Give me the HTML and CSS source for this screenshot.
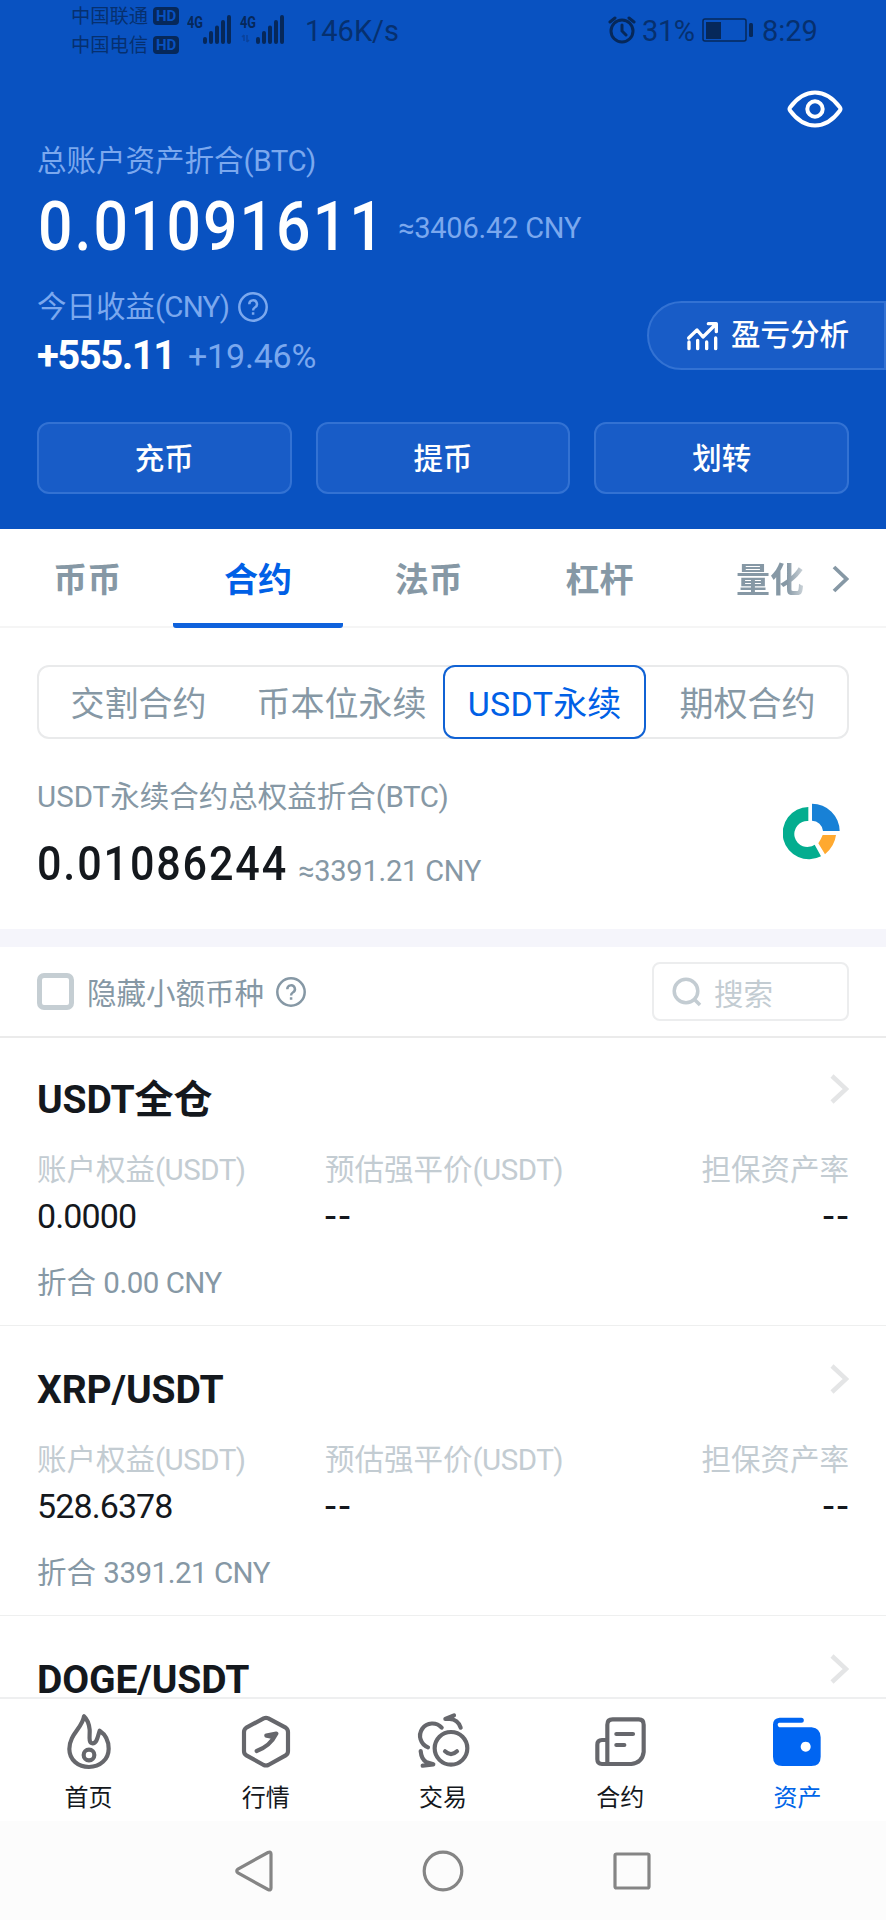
FILE: index.html
```html
<!DOCTYPE html>
<html lang="zh-CN">
<head>
<meta charset="utf-8">
<title>资产</title>
<link rel="stylesheet" href="styles.css">
</head>
<body>
<div class="app">
  <header class="hero">
    <div class="status">
      <div class="carriers">
        <div class="carrier">中国联通<span class="hd">HD</span></div>
        <div class="carrier">中国电信<span class="hd">HD</span></div>
      </div>
      <svg class="signal" width="100" height="32" viewBox="0 0 100 32">
        <g class="ink-line">
          <path d="M18 26v3M24 20v9M30 14.500v14.500M36 9v20M42 4v25"/>
          <path d="M71 26v3M77 20v9M83 14.500v14.500M89 9v20M95 4v25"/>
        </g>
        <path class="ink-faint" d="M57 22v6m-2-4 2-2m3 0v7m2-2-2 2"/>
        <text class="net" x="0" y="15" textLength="16" lengthAdjust="spacingAndGlyphs">4G</text>
        <text class="net" x="53" y="15" textLength="16" lengthAdjust="spacingAndGlyphs">4G</text>
      </svg>
      <span class="speed">146K/s</span>
      <svg class="alarm" width="28" height="28" viewBox="0 0 28 28">
        <circle cx="14" cy="15" r="11"/>
        <path d="M14 9v6l4 4M2 6l5-4M26 6l-5-4"/>
      </svg>
      <span class="percent">31%</span>
      <svg class="battery" width="52" height="24" viewBox="0 0 52 24">
        <rect class="cell" x="1" y="1" width="43" height="22" rx="2"/>
        <rect class="charge" x="4" y="4" width="15" height="17"/>
        <rect class="charge" x="47" y="5" width="4" height="14" rx="1.500"/>
      </svg>
      <span class="clock">8:29</span>
    </div>
    <div class="eye-row">
      <svg class="eye" width="56" height="38" viewBox="0 0 56 38">
        <path d="M3 17.500Q14 2.500 28 2.500T53 17.500Q54 19 53 20.500Q42 35.500 28 35.500T3 20.500Q2 19 3 17.500Z"/>
        <circle cx="28" cy="19" r="7.700"/>
      </svg>
    </div>
    <div class="label">总账户资产折合<span class="lat">(BTC)</span></div>
    <div class="balance"><span class="big"><span class="cond">0.01091611</span></span><span class="approx">≈3406.42 CNY</span></div>
    <div class="profit">
      <div>
        <div class="label">今日收益<span class="lat cny">(CNY)</span>
          <svg class="help" width="30" height="30" viewBox="0 0 30 30"><circle cx="15" cy="15" r="13.700"/><path d="M11.300 12.200a3.800 3.800 0 1 1 5.500 3.300q-1.700.9-1.700 2.900M15.100 20.300v2.500"/></svg>
        </div>
        <div class="gain"><b>+555.11</b><span>+19.46%</span></div>
      </div>
      <div class="analysis">
        <svg class="chart" width="34" height="30" viewBox="728 150 102 90">
          <path d="M736 201 761 177 779 198 815 162M795 158H819V182M737 213V233M763 208V233M790 213V233M817 201V233"/>
        </svg>
        盈亏分析
      </div>
    </div>
    <div class="actions"><div>充币</div><div>提币</div><div>划转</div></div>
  </header>

  <nav class="tabs">
    <div>币币</div><div class="on">合约</div><div>法币</div><div>杠杆</div><div class="fade">量化</div>
    <svg class="more" width="18" height="30" viewBox="0 0 18 30"><path d="M3 3 15.500 15 3 27"/></svg>
  </nav>

  <section class="summary">
    <div class="segment"><div>交割合约</div><div>币本位永续</div><div class="on"><span class="seg-lat">USDT</span>永续</div><div>期权合约</div></div>
    <div class="equity">
      <div>
        <div class="equity-label"><span class="lat usdt">USDT</span>永续合约总权益折合<span class="lat">(BTC)</span></div>
        <div class="equity-value"><span class="mid"><span class="cond">0.01086244</span></span><span class="approx">≈3391.21 CNY</span></div>
      </div>
      <svg class="pie" width="58" height="58" viewBox="1012 820 174 174">
        <path fill="#03ad8f" d="M1088 835A78.500 78.500 0 1 0 1126 983L1107 948A39 39 0 1 1 1088 877Z"/>
        <path fill="#1881d6" d="M1099 825A83 83 0 0 1 1182 907H1132A34 34 0 0 0 1099 876Z"/>
        <path fill="#ffa92f" d="M1131 919H1171Q1167 952 1138 977L1118 944Q1126 932 1131 919Z"/>
      </svg>
    </div>
  </section>

  <section class="filter">
    <span class="check"></span>
    <span class="hide-small">隐藏小额币种</span>
    <svg class="help" width="30" height="30" viewBox="0 0 30 30"><circle cx="15" cy="15" r="13.700"/><path d="M11.300 12.200a3.800 3.800 0 1 1 5.500 3.300q-1.700.9-1.700 2.900M15.100 20.300v2.500"/></svg>
    <div class="search">
      <svg width="30" height="30" viewBox="0 0 30 30"><circle cx="14" cy="14" r="11.800"/><path d="m22 22 6 6"/></svg>搜索
    </div>
  </section>

  <main class="list">
    <article class="item">
      <div class="title"><span class="t-lat">USDT</span>全仓
        <svg class="go" width="20" height="32" viewBox="0 0 20 32"><path d="M3 3 17 16 3 29"/></svg>
      </div>
      <div class="cols names"><div>账户权益<span class="lat par">(USDT)</span></div><div>预估强平价<span class="lat par">(USDT)</span></div><div>担保资产率</div></div>
      <div class="cols values"><div>0.0000</div><div class="none">--</div><div class="none">--</div></div>
      <div class="worth">折合 <span>0.00 CNY</span></div>
    </article>
    <article class="item">
      <div class="title"><span class="t-lat">XRP/USDT</span>
        <svg class="go" width="20" height="32" viewBox="0 0 20 32"><path d="M3 3 17 16 3 29"/></svg>
      </div>
      <div class="cols names"><div>账户权益<span class="lat par">(USDT)</span></div><div>预估强平价<span class="lat par">(USDT)</span></div><div>担保资产率</div></div>
      <div class="cols values"><div>528.6378</div><div class="none">--</div><div class="none">--</div></div>
      <div class="worth">折合 <span>3391.21 CNY</span></div>
    </article>
    <article class="item">
      <div class="title"><span class="t-lat">DOGE/USDT</span>
        <svg class="go" width="20" height="32" viewBox="0 0 20 32"><path d="M3 3 17 16 3 29"/></svg>
      </div>
    </article>
  </main>

  <nav class="dock">
    <div>
      <svg width="60" height="60" viewBox="176 96 180 180"><g class="stroke">
        <path d="M251 109C247 143 207 163 207 207C207 240 234 261 266 261C299 261 325 238 325 206C325 182 313 162 298 152C292 168 291 190 277 190C263 190 269 166 268 149C266 130 260 117 251 109Z"/>
        <circle cx="266" cy="225" r="16"/></g></svg>
      首页
    </div>
    <div>
      <svg width="60" height="60" viewBox="707 96 180 180"><g class="stroke">
        <path d="M790 115Q797 112 804 115L856 143Q863 148 863 156V214Q863 222 856 226L804 255Q797 258 790 255L738 226Q731 222 731 214V156Q731 148 738 143Z"/>
        <path d="M769 213Q810 198 828 161L798 167Q808 168 814 170"/></g></svg>
      行情
    </div>
    <div>
      <svg width="60" height="60" viewBox="1239 96 180 180"><g class="stroke">
        <circle cx="1353" cy="205" r="49"/>
        <path d="M1325 143A37 37 0 1 0 1284 202M1335 214Q1353 231 1371 214M1382 143Q1374 118 1349 117L1336 117 1362 106M1262 213Q1264 238 1280 247L1300 253 1268 257"/></g></svg>
      交易
    </div>
    <div>
      <svg width="60" height="60" viewBox="1770 96 180 180"><g class="stroke">
        <path d="M1822 252V134Q1822 118 1838 118H1916Q1931 118 1931 134V216Q1927 248 1894 252H1806Q1792 252 1792 238V194Q1792 180 1806 180H1822M1849 162H1899M1849 195H1873"/></g></svg>
      合约
    </div>
    <div class="on">
      <svg width="60" height="60" viewBox="2302 96 180 180">
        <path fill="#0065f2" fill-rule="evenodd" d="M2340 113H2405A7.500 7.500 0 0 1 2405 128H2338Q2334 129 2334 134T2339 142H2436Q2463 145 2463 172V230Q2463 258 2435 258H2348Q2320 258 2320 230V134Q2320 115 2340 113ZM2418 185A15 15 0 1 0 2418.100 185Z"/></svg>
      资产
    </div>
  </nav>

  <footer class="keys">
    <svg width="40" height="44" viewBox="0 0 40 44"><path d="M34 3.500Q37 2 37 5V39Q37 42 34 40.500L4 24Q1.500 22 4 20Z"/></svg>
    <svg width="44" height="44" viewBox="0 0 44 44"><circle cx="22" cy="22" r="18.800"/></svg>
    <svg width="40" height="40" viewBox="0 0 40 40"><rect x="3" y="3" width="34" height="34" rx="1.500"/></svg>
  </footer>
</div>
</body>
</html>
```

FILE: styles.css
```css
* { box-sizing: border-box; }
body { margin: 0; background: #fff; }
svg { display: block; flex: none; fill: none; }
.app {
  width: 886px;
  height: 1920px;
  overflow: hidden;
  display: flex;
  flex-direction: column;
  font-family: Roboto, "Noto Sans CJK SC", sans-serif;
  font-size: 29.500px;
  color: #14181d;
  white-space: nowrap;
}
.lat { letter-spacing: -0.400px; }
.cny { letter-spacing: -0.800px; }
.usdt { letter-spacing: 0; }
.par { letter-spacing: -0.500px; }
.cond { display: inline-block; transform: scaleX(0.88); transform-origin: 0 50%; }

/* Header */
.hero { height: 529px; flex: none; background: #0952c1; color: #fff; padding-left: 37px; }
.status { height: 62px; display: flex; color: #06306f; padding-left: 34px; font-size: 29px; line-height: 60px; }
.carriers { width: 116px; padding-top: 1px; }
.carrier { height: 29px; line-height: 29px; font-size: 19.300px; display: flex; align-items: center; font-family: "Noto Sans CJK SC", sans-serif; }
.hd { margin-left: 5px; width: 26px; height: 18px; border-radius: 4px; background: #06285a; color: #0952c1; font: 700 15px/18px Roboto, sans-serif; text-align: center; }
.signal { margin-top: 13px; }
.net { font: 700 16px Roboto, sans-serif; fill: #06285a; }
.ink-line { stroke: #06285a; stroke-width: 4; stroke-linecap: round; }
.ink-faint { stroke: #0a429a; stroke-width: 1.500; }
.speed { margin-left: 18px; width: 96px; padding-top: 1px; }
.alarm { margin: 16px 0 0 207px; stroke: #06285a; stroke-width: 3; stroke-linecap: round; }
.percent { width: 60px; margin-left: 6px; padding-top: 1px; letter-spacing: -0.400px; }
.battery { margin-top: 18px; margin-right: 8px; }
.cell { stroke: #06285a; stroke-width: 1.500; }
.charge { fill: #06285a; }
.clock { padding-top: 1px; }
.eye-row { height: 80px; padding: 28px 43px 0 0; display: flex; justify-content: flex-end; }
.eye { stroke: #fff; stroke-width: 4; }
.label { height: 40px; line-height: 38px; color: #7ba8ee; display: flex; align-items: center; margin-top: -1px; }
.balance { height: 80px; margin-top: 6px; display: flex; align-items: center; line-height: 80px; }
.big { width: 361px; padding-left: 1px; font-size: 69px; font-weight: 500; letter-spacing: 2.300px; }
.approx { font-size: 29px; letter-spacing: -0.200px; color: #7ba8ee; padding-top: 1px; }
.profit { display: flex; justify-content: space-between; padding-top: 21px; height: 155px; }
.help { margin-left: 9px; stroke: currentColor; stroke-width: 2.500; }
.gain { display: flex; align-items: center; height: 40px; line-height: 40px; margin-top: 9px; }
.gain b { width: 151px; font-size: 40px; letter-spacing: -1.500px; }
.gain span { font-size: 34px; letter-spacing: -0.200px; color: #7ba8ee; }
.analysis { width: 239px; height: 69px; margin-top: 13px; border: 2px solid #3372d3; border-radius: 35px 0 0 35px; background: #185cc7; display: flex; align-items: center; padding-left: 37px; line-height: 65px; font-weight: 500; }
.chart { margin-right: 11px; stroke: #fff; stroke-width: 10; stroke-linecap: round; stroke-linejoin: round; }
.actions { display: grid; grid-template-columns: repeat(3, 1fr); gap: 24px; padding-right: 37px; }
.actions div { height: 72px; border: 2px solid #3372d3; border-radius: 12px; background: #185cc7; line-height: 71px; text-align: center; font-weight: 500; }

/* Account tabs */
.tabs { height: 99px; flex: none; border-bottom: 2px solid #f5f5f5; padding-left: 2px; display: flex; font-size: 34px; font-weight: 700; color: #8698a5; line-height: 102px; }
.tabs div { width: 170.700px; height: 99px; text-align: center; }
.tabs .on { color: #0060e6; border-bottom: 5px solid #0f62dc; border-radius: 3px; }
.tabs .fade { background: linear-gradient(90deg, #8698a5 60%, #e3e7ea 73%); background-clip: text; color: transparent; }
.more { margin: 35px 0 0 -24px; stroke: #8698a5; stroke-width: 3.800; }

/* Contract summary */
.summary { height: 301px; flex: none; padding: 37px 37px 0; }
.segment { height: 74px; border-radius: 12px; box-shadow: inset 0 0 0 2px #e9eaeb; display: grid; grid-template-columns: repeat(4, 1fr); font-size: 34px; line-height: 78px; text-align: center; color: #8698a5; }
.segment div { height: 74px; }
.segment .on { border-radius: 12px; box-shadow: inset 0 0 0 2px #1062d4; color: #0060e6; }
.seg-lat { letter-spacing: 0.300px; }
.equity { display: flex; justify-content: space-between; }
.equity-label { height: 40px; line-height: 40px; margin-top: 38px; color: #8698a5; }
.equity-value { display: flex; height: 60px; line-height: 60px; margin-top: 10px; }
.mid { width: 261px; font-size: 49px; font-weight: 500; letter-spacing: 2.100px; padding-top: 7px; }
.equity-value .approx { color: #8698a5; padding-top: 14px; }
.pie { margin: 63px 8px 0 0; }

/* Filter row */
.filter { height: 109px; flex: none; border-top: 18px solid #f5f5fb; border-bottom: 2px solid #ebebeb; padding: 0 37px; display: flex; align-items: center; color: #8698a5; }
.check { width: 37px; height: 37px; border: 5px solid #c5ced3; border-radius: 7px; margin-right: 13px; }
.hide-small { padding-bottom: 2px; }
.filter .help { margin-left: 12px; }
.search { width: 197px; height: 59px; margin-left: auto; border: 2px solid #ecedee; border-radius: 8px; display: flex; align-items: center; padding-left: 18px; color: #c3ccd2; }
.search svg { stroke: #c3ccd2; stroke-width: 3.500; margin-right: 12px; }

/* Positions */
.list { height: 659px; flex: none; overflow: hidden; }
.item { height: 290px; border-bottom: 1px solid #eeefef; padding: 43px 37px 0; }
.item:first-child { height: 288px; padding-top: 41px; }
.title { height: 42px; line-height: 42px; font-size: 39px; font-weight: 700; display: flex; align-items: center; }
.t-lat { letter-spacing: -0.100px; }
.go { margin: -22px 0 0 auto; stroke: #e4e5e6; stroke-width: 4.500; }
.cols { display: grid; grid-template-columns: 288px 1fr auto; }
.names { height: 40px; line-height: 40px; margin-top: 29px; color: #c3ccd2; }
.values { height: 40px; line-height: 40px; margin-top: 6px; font-size: 34px; letter-spacing: -0.900px; }
.none { font-size: 40px; letter-spacing: 3px; margin-right: -2px; padding-top: 1px; }
.worth { height: 40px; line-height: 40px; margin-top: 27px; color: #8698a5; }
.worth span { letter-spacing: -0.500px; }

/* Bottom navigation */
.dock { height: 124px; flex: none; border-top: 2px solid #eeeff0; display: grid; grid-template-columns: repeat(5, 1fr); justify-items: center; font-size: 24px; background: #fff; }
.dock div { display: flex; flex-direction: column; align-items: center; line-height: 40px; padding-top: 13px; }
.dock .on { color: #0065e8; }
.dock svg { margin-bottom: 6px; }
.stroke { stroke: #66676c; stroke-width: 12.500; stroke-linecap: round; stroke-linejoin: round; }
.keys { flex: 1; background: #fcfcfc; display: flex; align-items: center; padding-left: 234px; gap: 147px; stroke: #858585; stroke-width: 3.200; }
```
